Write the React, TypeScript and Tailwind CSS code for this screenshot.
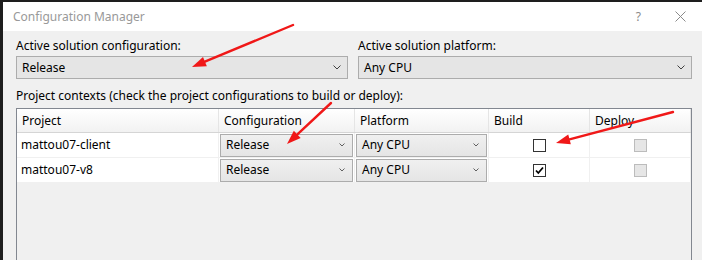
import React from 'react';

const font = { fontFamily: '"Noto Sans", "Segoe UI", sans-serif' };

function Chevron({ small = false }: { small?: boolean }) {
  return small ? (
    <svg width="6" height="4" viewBox="0 0 6 4" className="shrink-0">
      <path d="M0.5 0.5 L3 3 L5.5 0.5" fill="none" stroke="#606060" strokeWidth="1" />
    </svg>
  ) : (
    <svg width="8" height="5" viewBox="0 0 8 5" className="shrink-0">
      <path d="M0.5 0.5 L4 4 L7.5 0.5" fill="none" stroke="#404040" strokeWidth="1" />
    </svg>
  );
}

function Combo({ value }: { value: string }) {
  return (
    <div className="h-[23px] flex items-center justify-between pl-[5px] pr-[6px] bg-[#e5e5e5] border border-[#acacac] text-[12px] text-black">
      <span>{value}</span>
      <Chevron />
    </div>
  );
}

function CellCombo({ value }: { value: string }) {
  return (
    <div className="h-[23px] mx-[1px] flex items-center justify-between pl-[5px] pr-[7px] bg-gradient-to-b from-[#f0f0f0] to-[#e5e5e5] border border-[#acacac] text-[12px] text-black">
      <span>{value}</span>
      <Chevron small />
    </div>
  );
}

function CheckBox({ checked = false, disabled = false }: { checked?: boolean; disabled?: boolean }) {
  return (
    <div
      className={
        disabled
          ? 'w-[13px] h-[13px] bg-[#e6e6e6] border border-[#bcbcbc]'
          : 'w-[13px] h-[13px] bg-white border border-[#333333] flex items-center justify-center'
      }
    >
      {checked && (
        <svg width="11" height="11" viewBox="0 0 11 11">
          <path d="M2 5.5 L4.3 8 L9 2.5" fill="none" stroke="#000" strokeWidth="1.8" />
        </svg>
      )}
    </div>
  );
}

function Arrow({ x1, y1, x2, y2 }: { x1: number; y1: number; x2: number; y2: number }) {
  const dx = x2 - x1;
  const dy = y2 - y1;
  const len = Math.hypot(dx, dy);
  const ux = dx / len;
  const uy = dy / len;
  const hl = 14;
  const hw = 5;
  const bx = x2 - ux * hl;
  const by = y2 - uy * hl;
  const pts = `${x2},${y2} ${bx - uy * hw},${by + ux * hw} ${bx + uy * hw},${by - ux * hw}`;
  return (
    <g>
      <line x1={x1} y1={y1} x2={bx + ux * 2} y2={by + uy * 2} stroke="#f01818" strokeWidth="2.4" strokeLinecap="round" />
      <polygon points={pts} fill="#f01818" />
    </g>
  );
}

const rows = [
  { name: 'mattou07-client', build: false },
  { name: 'mattou07-v8', build: true },
];

export default function App() {
  return (
    <div className="relative w-[702px] h-[260px] overflow-hidden bg-[#1e1e1e] pt-[2px] pl-[3px]" style={font}>
      <div className="flex flex-col h-full bg-[#f0f0f0]">
        {/* title bar */}
        <div className="h-[29px] shrink-0 bg-white flex items-center justify-between pl-[10px] pr-[16px] text-[12px] text-[#999999]">
          <span>Configuration Manager</span>
          <div className="flex items-center gap-[34px] text-[#8a8a8a]">
            <span className="text-[12px]">?</span>
            <svg width="11" height="11" viewBox="0 0 11 11">
              <path d="M0.5 0.5 L10.5 10.5 M10.5 0.5 L0.5 10.5" stroke="#8a8a8a" strokeWidth="1" />
            </svg>
          </div>
        </div>

        {/* body */}
        <div className="flex-1 pl-[13px] pr-[10px] pt-[7px] text-[12px] text-black">
          <div className="grid grid-cols-[332px_334px] gap-x-[10px]">
            <div>
              <div className="h-[16px] leading-[16px] mb-[2px]">Active solution configuration:</div>
              <Combo value="Release" />
            </div>
            <div>
              <div className="h-[16px] leading-[16px] mb-[2px]">Active solution platform:</div>
              <Combo value="Any CPU" />
            </div>
          </div>

          <div className="h-[16px] leading-[16px] mt-[9px] mb-[4px]">
            Project contexts (check the project configurations to build or deploy):
          </div>

          <div className="w-[676px] h-[200px] border border-[#828790] bg-[#f0f0f0]">
            <div className="grid grid-cols-[202px_136px_134px_101px_101px] h-[24px] bg-gradient-to-b from-white to-[#f2f2f2] border-b border-[#d5d5d5]">
              {['Project', 'Configuration', 'Platform', 'Build', 'Deploy'].map((h) => (
                <div key={h} className="border-r border-[#e5e5e5] pl-[5px] pt-[4px] leading-[16px]">
                  {h}
                </div>
              ))}
            </div>
            {rows.map((r) => (
              <div
                key={r.name}
                className="grid grid-cols-[202px_136px_134px_101px_101px] h-[25px] bg-white border-b border-[#f0f0f0]"
              >
                <div className="border-r border-[#f0f0f0] pl-[4px] flex items-center">{r.name}</div>
                <div className="border-r border-[#f0f0f0] flex items-center">
                  <div className="w-full">
                    <CellCombo value="Release" />
                  </div>
                </div>
                <div className="border-r border-[#f0f0f0] flex items-center">
                  <div className="w-full">
                    <CellCombo value="Any CPU" />
                  </div>
                </div>
                <div className="border-r border-[#f0f0f0] flex items-center justify-center">
                  <CheckBox checked={r.build} />
                </div>
                <div className="border-r border-[#f0f0f0] flex items-center justify-center">
                  <CheckBox disabled />
                </div>
              </div>
            ))}
          </div>
        </div>
      </div>

      <svg className="absolute inset-0 pointer-events-none" width="702" height="260">
        <Arrow x1={293} y1={25} x2={192} y2={67} />
        <Arrow x1={331} y1={103} x2={287} y2={144} />
        <Arrow x1={673} y1={112} x2={556} y2={143} />
      </svg>
    </div>
  );
}
